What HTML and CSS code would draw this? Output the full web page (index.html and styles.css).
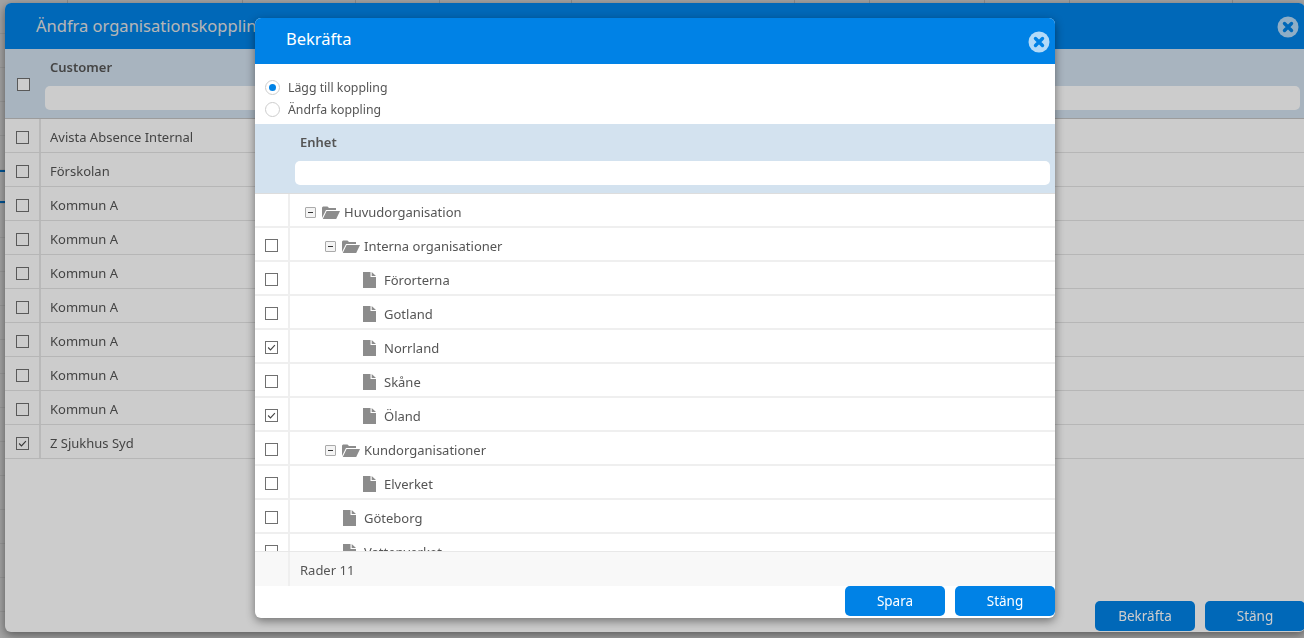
FILE: index.html
```html
<!DOCTYPE html>
<html lang="sv">
<head>
    <meta charset="UTF-8">
    <title>Ändra organisationskoppling</title>
    <link rel="stylesheet" href="styles.css">
</head>
<body>
    <svg class="sprites" width="0" height="0">
        <symbol id="i-check" viewBox="0 0 13 13"><path d="M2.5 6.5 5.3 9.3 10.5 3.6" fill="none" stroke="currentColor" stroke-width="1.3"/></symbol>
        <symbol id="i-folder" viewBox="0 0 18 13"><path d="M0 12V1.5L1 .5H5.5L7 2H14V4H4L0 12ZM4.6 5H18L14.2 13H.8L4.6 5Z" fill="currentColor"/></symbol>
        <symbol id="i-file" viewBox="0 0 13 16"><path d="M0 0H7.5V5H13V16H0ZM8.7 0 13 3.9H8.7Z" fill="currentColor"/></symbol>
        <symbol id="i-close" viewBox="0 0 22 22"><circle cx="11" cy="11" r="10.5" fill="#fff" fill-opacity=".7"/><path d="M7.5 7.5 14.5 14.5M14.5 7.5 7.5 14.5" stroke="#0082e6" stroke-width="3.4" stroke-linecap="round"/></symbol>
    </svg>

    <!-- Page behind the dialogs -->
    <div class="page">
        <div class="page-col w68"></div>
        <div class="page-col w175"></div>
        <div class="page-col w113"></div>
        <div class="page-col w84"></div>
        <div class="page-col w132"></div>
        <div class="page-col w223"></div>
        <div class="page-col w75"></div>
        <div class="page-col w115"></div>
        <div class="page-col w85"></div>
        <div class="page-col w163"></div>
        <span class="page-bar bar-one"></span>
        <span class="page-bar bar-two"></span>
    </div>
    <div class="overlay"></div>

    <!-- Customer dialog -->
    <div class="dialog dialog-back">
        <div class="dialog-header">
            <h2 class="dialog-title title-back">Ändfra organisationskoppling</h2>
            <svg class="close-icon"><use href="#i-close"/></svg>
        </div>
        <div class="grid-head">
            <div class="check-col"><span class="check"></span></div>
            <div class="head-main">
                <div class="head-label">Customer</div>
                <input type="text" class="filter">
            </div>
        </div>
        <div class="grid-row"><div class="check-col"><span class="check"></span></div><div class="cell">Avista Absence Internal</div></div>
        <div class="grid-row"><div class="check-col"><span class="check"></span></div><div class="cell">Förskolan</div></div>
        <div class="grid-row"><div class="check-col"><span class="check"></span></div><div class="cell">Kommun A</div></div>
        <div class="grid-row"><div class="check-col"><span class="check"></span></div><div class="cell">Kommun A</div></div>
        <div class="grid-row"><div class="check-col"><span class="check"></span></div><div class="cell">Kommun A</div></div>
        <div class="grid-row"><div class="check-col"><span class="check"></span></div><div class="cell">Kommun A</div></div>
        <div class="grid-row"><div class="check-col"><span class="check"></span></div><div class="cell">Kommun A</div></div>
        <div class="grid-row"><div class="check-col"><span class="check"></span></div><div class="cell">Kommun A</div></div>
        <div class="grid-row"><div class="check-col"><span class="check"></span></div><div class="cell">Kommun A</div></div>
        <div class="grid-row"><div class="check-col"><span class="check"><svg><use href="#i-check"/></svg></span></div><div class="cell">Z Sjukhus Syd</div></div>
        <div class="dialog-footer footer-back">
            <button class="btn">Bekräfta</button>
            <button class="btn">Stäng</button>
        </div>
    </div>
    <div class="overlay"></div>

    <!-- Confirm dialog -->
    <div class="dialog dialog-front">
        <div class="dialog-header">
            <h2 class="dialog-title title-front">Bekräfta</h2>
            <svg class="close-icon"><use href="#i-close"/></svg>
        </div>
        <div class="radio-group">
            <div class="radio-row"><span class="radio selected"></span>Lägg till koppling</div>
            <div class="radio-row"><span class="radio"></span>Ändrfa koppling</div>
        </div>
        <div class="tree-head">
            <div class="head-label">Enhet</div>
            <input type="text" class="filter">
        </div>
        <div class="tree-body">
            <div class="tree-row"><div class="check-col"></div><div class="tree-cell level-0"><span class="toggler"></span><svg class="folder"><use href="#i-folder"/></svg>Huvudorganisation</div></div>
            <div class="tree-row"><div class="check-col"><span class="check"></span></div><div class="tree-cell level-1"><span class="toggler"></span><svg class="folder"><use href="#i-folder"/></svg>Interna organisationer</div></div>
            <div class="tree-row"><div class="check-col"><span class="check"></span></div><div class="tree-cell level-2"><svg class="file"><use href="#i-file"/></svg>Förorterna</div></div>
            <div class="tree-row"><div class="check-col"><span class="check"></span></div><div class="tree-cell level-2"><svg class="file"><use href="#i-file"/></svg>Gotland</div></div>
            <div class="tree-row"><div class="check-col"><span class="check"><svg><use href="#i-check"/></svg></span></div><div class="tree-cell level-2"><svg class="file"><use href="#i-file"/></svg>Norrland</div></div>
            <div class="tree-row"><div class="check-col"><span class="check"></span></div><div class="tree-cell level-2"><svg class="file"><use href="#i-file"/></svg>Skåne</div></div>
            <div class="tree-row"><div class="check-col"><span class="check"><svg><use href="#i-check"/></svg></span></div><div class="tree-cell level-2"><svg class="file"><use href="#i-file"/></svg>Öland</div></div>
            <div class="tree-row"><div class="check-col"><span class="check"></span></div><div class="tree-cell level-1"><span class="toggler"></span><svg class="folder"><use href="#i-folder"/></svg>Kundorganisationer</div></div>
            <div class="tree-row"><div class="check-col"><span class="check"></span></div><div class="tree-cell level-2"><svg class="file"><use href="#i-file"/></svg>Elverket</div></div>
            <div class="tree-row"><div class="check-col"><span class="check"></span></div><div class="tree-cell level-1-file"><svg class="file"><use href="#i-file"/></svg>Göteborg</div></div>
            <div class="tree-row"><div class="check-col"><span class="check"></span></div><div class="tree-cell level-1-file"><svg class="file"><use href="#i-file"/></svg>Vattenverket</div></div>
        </div>
        <div class="tree-foot">
            <div class="check-col"></div>
            <div class="foot-text">Rader 11</div>
        </div>
        <div class="dialog-footer">
            <button class="btn">Spara</button>
            <button class="btn">Stäng</button>
        </div>
    </div>
</body>
</html>
```

FILE: styles.css
```css
* {
    margin: 0;
    padding: 0;
    box-sizing: border-box;
    font-family: 'Noto Sans', 'Open Sans', sans-serif;
}

html, body {
    height: 100%;
    overflow: hidden;
}

body {
    background-color: #fff;
    color: #555;
    font-size: 13px;
}

.sprites {
    position: absolute;
}

/* Page behind the dialogs */
.page {
    display: flex;
    align-items: flex-start;
    height: 100%;
    background-image: repeating-linear-gradient(to bottom, #fff 0, #fff 33px, #eee 33px, #eee 34px);
}

.page-col {
    height: 32px;
    border-right: 1px solid #ddd;
}

.w68 { width: 68px; }
.w175 { width: 175px; }
.w113 { width: 113px; }
.w84 { width: 84px; }
.w132 { width: 132px; }
.w223 { width: 223px; }
.w75 { width: 75px; }
.w115 { width: 115px; }
.w85 { width: 85px; }
.w163 { width: 163px; }

.page-bar {
    position: absolute;
    left: 0;
    width: 5px;
    height: 2px;
    background-color: #0082e6;
}

.bar-one { top: 170px; }
.bar-two { top: 201px; }

.overlay {
    position: fixed;
    top: 0;
    left: 0;
    width: 100%;
    height: 100%;
    background-color: rgba(0, 0, 0, 0.2);
}

/* Dialogs */
.dialog {
    position: absolute;
    display: flex;
    flex-direction: column;
    background-color: #fff;
    border-radius: 6px;
    overflow: hidden;
    box-shadow: 0 3px 10px rgba(0, 0, 0, 0.45);
}

.dialog-back {
    top: 3px;
    left: 5px;
    width: 1300px;
    height: 629px;
}

.dialog-front {
    top: 18px;
    left: 255px;
    width: 800px;
    height: 600px;
}

.dialog-header {
    display: flex;
    align-items: center;
    justify-content: space-between;
    flex-shrink: 0;
    height: 46px;
    background-color: #0082e6;
    color: #fff;
}

.dialog-title {
    font-weight: 400;
    padding-left: 31px;
}

.title-back {
    padding-bottom: 2px;
    color: #e4e4e4;
    font-size: 16.5px;
}

.title-front {
    padding-bottom: 5px;
    font-size: 16.5px;
}

.close-icon {
    width: 22px;
    height: 22px;
    margin: 2px 5px 0 0;
}

.dialog-back .close-icon {
    margin-right: 6px;
}

.dialog-footer {
    display: flex;
    justify-content: flex-end;
    gap: 10px;
    margin-top: auto;
    padding-bottom: 2px;
}

.footer-back {
    padding-bottom: 1px;
}

.btn {
    width: 100px;
    height: 30px;
    background-color: #0082e6;
    color: #fff;
    border: none;
    border-radius: 5px;
    font-size: 13.5px;
    cursor: pointer;
}

/* Grid on the customer dialog */
.grid-head {
    display: flex;
    height: 70px;
    flex-shrink: 0;
    background-color: #d3e2ef;
    border-bottom: 1px solid #c4c4c4;
}

.check-col {
    display: flex;
    align-items: center;
    justify-content: center;
    flex-shrink: 0;
    width: 35px;
}

.grid-head .check-col {
    width: 36px;
    padding-top: 2px;
}

.head-main {
    flex: 1;
    padding: 8px 5px 0 4px;
}

.head-label {
    padding-left: 5px;
    height: 29px;
    font-size: 13px;
    font-weight: 600;
    line-height: 20px;
}

.filter {
    display: block;
    width: 100%;
    height: 24px;
    background-color: #fff;
    border: none;
    border-radius: 5px;
}

.grid-row {
    display: flex;
    flex-shrink: 0;
    height: 34px;
    border-bottom: 1px solid #e4e4e4;
}

.grid-row .check-col {
    width: 36px;
    padding-top: 4px;
    border-right: 2px solid #e8e8e8;
}

.cell {
    padding-left: 9px;
    line-height: 37px;
}

.check {
    display: block;
    width: 13px;
    height: 13px;
    background-color: #fff;
    border: 1px solid #707070;
    color: #444;
}

.check svg {
    display: block;
    width: 11px;
    height: 11px;
}

/* Radio choices */
.radio-group {
    flex-shrink: 0;
    height: 60px;
    padding: 12px 0 0 10px;
    font-size: 12.3px;
}

.radio-row {
    display: flex;
    align-items: center;
    gap: 8px;
    height: 22px;
}

.radio {
    display: flex;
    align-items: center;
    justify-content: center;
    width: 15px;
    height: 15px;
    border: 1px solid #ccc;
    border-radius: 50%;
}

.radio.selected::after {
    content: "";
    width: 7px;
    height: 7px;
    border-radius: 50%;
    background-color: #0082e6;
}

/* Tree on the confirm dialog */
.tree-head {
    flex-shrink: 0;
    height: 70px;
    padding: 8px 5px 0 40px;
    background-color: #d3e2ef;
    border-bottom: 1px solid #ddd;
}

.tree-body {
    flex-shrink: 0;
    height: 357px;
    overflow: hidden;
}

.tree-row {
    display: flex;
    height: 34px;
    border-bottom: 2px solid #efefef;
}

.tree-row .check-col {
    padding-top: 2px;
    border-right: 2px solid #efefef;
}

.tree-cell {
    display: flex;
    align-items: center;
    padding-top: 4px;
}

.level-0 { padding-left: 15px; }
.level-1 { padding-left: 35px; }
.level-1-file { padding-left: 53px; }
.level-2 { padding-left: 73px; }

.toggler {
    display: flex;
    align-items: center;
    justify-content: center;
    width: 11px;
    height: 11px;
    margin-right: 6px;
    border: 1px solid #aaa;
    border-radius: 1px;
    background-color: #f4f4f4;
}

.toggler::after {
    content: "";
    width: 5px;
    height: 1px;
    background-color: #333;
}

.folder {
    width: 18px;
    height: 13px;
    margin-right: 4px;
    color: #8c8c8c;
}

.file {
    width: 13px;
    height: 16px;
    margin-right: 8px;
    color: #8c8c8c;
}

.tree-foot {
    display: flex;
    flex-shrink: 0;
    height: 35px;
    background-color: #f8f8f8;
    border-top: 1px solid #e8e8e8;
}

.tree-foot .check-col {
    border-right: 2px solid #efefef;
}

.foot-text {
    padding-left: 10px;
    line-height: 36px;
}
```
